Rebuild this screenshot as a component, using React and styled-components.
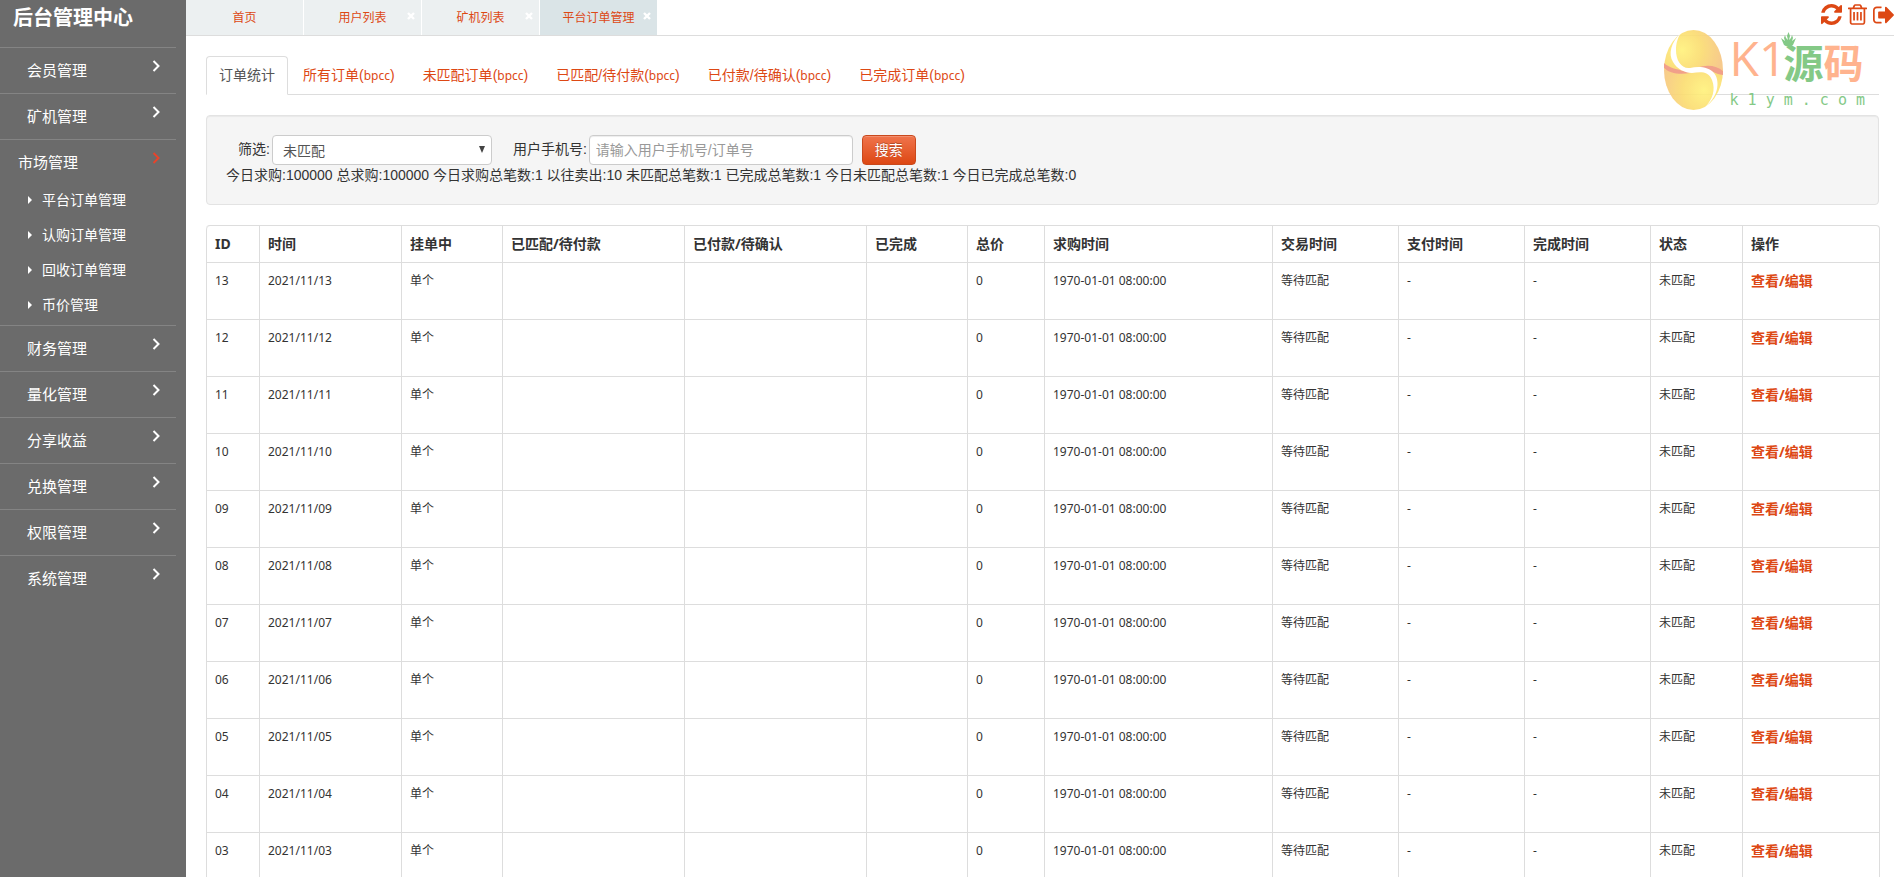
import React, { useState } from 'react'
import styled, { createGlobalStyle, css } from "styled-components";

const menus = [
  { name: "会员管理" },
  { name: "矿机管理" },
  {
    name: "市场管理",
    children: ["平台订单管理", "认购订单管理", "回收订单管理", "币价管理"]
  },
  { name: "财务管理" },
  { name: "量化管理" },
  { name: "分享收益" },
  { name: "兑换管理" },
  { name: "权限管理" },
  { name: "系统管理" }
]

const pages = ["首页", "用户列表", "矿机列表", "平台订单管理"]

const orderTabs = ["所有订单", "未匹配订单", "已匹配/待付款", "已付款/待确认", "已完成订单"]

const columns = [
  { title: "ID", width: 53 },
  { title: "时间", width: 142 },
  { title: "挂单中", width: 101 },
  { title: "已匹配/待付款", width: 182 },
  { title: "已付款/待确认", width: 182 },
  { title: "已完成", width: 101 },
  { title: "总价", width: 77 },
  { title: "求购时间", width: 228 },
  { title: "交易时间", width: 126 },
  { title: "支付时间", width: 126 },
  { title: "完成时间", width: 126 },
  { title: "状态", width: 92 },
  { title: "操作", width: 137 }
]

const days = ["13", "12", "11", "10", "09", "08", "07", "06", "05", "04", "03"]

const RefreshIcon = () => (
  <svg width="21" height="21" viewBox="0 0 1536 1536" fill="currentColor" aria-hidden="true">
    <path d="M1511 928q0 5-1 7-64 268-268 434.500t-478 166.500q-146 0-282.500-55t-243.500-157l-129 129q-19 19-45 19t-45-19-19-45v-448q0-26 19-45t45-19h448q26 0 45 19t19 45-19 45l-137 137q71 66 161 102t187 36q134 0 250-65t186-179q11-17 53-117 8-23 30-23h192q13 0 22.500 9.500t9.500 22.500zm25-800v448q0 26-19 45t-45 19h-448q-26 0-45-19t-19-45 19-45l138-138q-148-137-349-137-134 0-250 65t-186 179q-11 17-53 117-8 23-30 23h-199q-13 0-22.500-9.500t-9.500-22.500v-7q65-268 270-434.500t480-166.500q146 0 284 55.500t245 156.500l130-129q19-19 45-19t45 19 19 45z" />
  </svg>
)

const TrashIcon = () => (
  <svg width="19" height="21" viewBox="0 192 1408 1536" fill="currentColor" aria-hidden="true">
    <path d="M512 800v576q0 14-9 23t-23 9h-64q-14 0-23-9t-9-23v-576q0-14 9-23t23-9h64q14 0 23 9t9 23zm256 0v576q0 14-9 23t-23 9h-64q-14 0-23-9t-9-23v-576q0-14 9-23t23-9h64q14 0 23 9t9 23zm256 0v576q0 14-9 23t-23 9h-64q-14 0-23-9t-9-23v-576q0-14 9-23t23-9h64q14 0 23 9t9 23zm128 724v-948h-896v948q0 22 7 40.500t14.500 27 10.500 8.500h832q3 0 10.500-8.500t14.500-27 7-40.500zm-672-1076h448l-48-117q-7-9-17-11h-317q-10 2-17 11zm928 32v64q0 14-9 23t-23 9h-96v948q0 83-47 143.500t-113 60.500h-832q-66 0-113-58.500t-47-141.500v-952h-96q-14 0-23-9t-9-23v-64q0-14 9-23t23-9h309l70-167q15-37 54-63t79-26h320q40 0 79 26t54 63l70 167h309q14 0 23 9t9 23z" />
  </svg>
)

const LogoutIcon = () => (
  <svg width="21" height="18" viewBox="0 256 1568 1280" fill="currentColor" aria-hidden="true">
    <path d="M640 1440q0 4 1 20t.5 26.500-3 23.500-10 19.500-20.500 6.500h-320q-119 0-203.500-84.500t-84.500-203.500v-704q0-119 84.500-203.500t203.500-84.500h320q13 0 22.500 9.500t9.500 22.500q0 4 1 20t.5 26.500-3 23.500-10 19.500-20.500 6.500h-320q-66 0-113 47t-47 113v704q0 66 47 113t113 47h312l11.500 1 11.500 3 8 5.500 7 9 2 13.500zm928-544q0 26-19 45l-544 544q-19 19-45 19t-45-19-19-45v-288h-448q-26 0-45-19t-19-45v-384q0-26 19-45t45-19h448v-288q0-26 19-45t45-19 45 19l544 544q19 19 19 45z" />
  </svg>
)

const Angle = () => (
  <svg width="8" height="12" viewBox="0 0 8 12" fill="none" stroke="currentColor" strokeWidth="2" aria-hidden="true">
    <path d="M1.500 1L6.500 6L1.500 11" />
  </svg>
)

const Caret = () => (
  <svg width="4" height="8" viewBox="0 0 4 8" fill="currentColor" aria-hidden="true">
    <path d="M0 0L4 4L0 8z" />
  </svg>
)

const Cross = () => (
  <svg width="8" height="8" viewBox="0 0 8 8" stroke="currentColor" strokeWidth="2.400" aria-hidden="true">
    <path d="M1 1L7 7M7 1L1 7" />
  </svg>
)

const LogoMark = () => (
  <svg width="60" height="80" viewBox="0 0 60 80" aria-hidden="true">
    <defs>
      <radialGradient id="goldTop" gradientUnits="userSpaceOnUse" cx="19" cy="20" r="40">
        <stop offset="0" stopColor="#fff27a" />
        <stop offset="0.5" stopColor="#fbdc70" />
        <stop offset="1" stopColor="#f7c580" />
      </radialGradient>
      <radialGradient id="goldBottom" gradientUnits="userSpaceOnUse" cx="41" cy="60" r="44">
        <stop offset="0" stopColor="#fff27a" />
        <stop offset="0.5" stopColor="#fbdc70" />
        <stop offset="1" stopColor="#f7c580" />
      </radialGradient>
    </defs>
    <path d="M1 40A29.500 40 0 0 1 60 40z" fill="url(#goldTop)" />
    <path d="M1 40A29.500 40 0 0 0 60 40z" fill="url(#goldBottom)" />
    <path d="M1 33C6 38 14 39 20 41L27 43C16 45 6 43 1 38z" fill="#f0967e" />
    <path d="M60 45C52 44 46 39 34 38C44 34 54 36 60 41z" fill="#f0967e" />
    {/* white band between the two halves */}
    <path
      d="M18 3C8 12 5 24 10 32C14 39 22 43 29 43C38 42 45 41 49 50C53 60 49 70 43 76C56 66 57 50 51 43C46 37 36 36 27 38C18 39 13 30 13 20C13 13 15 7 18 3z"
      fill="#fff"
    />
  </svg>
)

const Crown = () => (
  <svg width="15" height="15" viewBox="0 0 15 15" fill="currentColor" aria-hidden="true">
    <path d="M7.500 0L9 4L8 8L10 6L11 3L12 6L11 9L15 6L12 13Q7.500 16 3 13L0 6L4 9L3 6L4 3L5 6L7 8L6 4z" />
  </svg>
)

const App = () => {
  const [keyword, setKeyword] = useState("")
  const [status, setStatus] = useState("0")

  return (
    <>
      <GlobalStyle />
      <Layout>
        <Sidebar>
          <Brand>后台管理中心</Brand>
          <nav>
            {menus.map(menu => (
              <MenuGroup key={menu.name}>
                <MenuButton type="button" $open={!!menu.children}>
                  {menu.name}
                  <Angle />
                </MenuButton>
                {menu.children ? menu.children.map(child => (
                  <SubLink href="#" key={child}>
                    <Caret />
                    {child}
                  </SubLink>
                )) : null}
              </MenuGroup>
            ))}
          </nav>
        </Sidebar>

        <Main>
          <TopBar>
            {pages.map((page, index) => (
              <PageTab key={page} $active={index === 3}>
                <a href="#">{page}</a>
                {index > 0 ? (
                  <CloseButton type="button" aria-label={"关闭" + page}>
                    <Cross />
                  </CloseButton>
                ) : null}
              </PageTab>
            ))}
            <Tools>
              <ToolButton type="button" aria-label="刷新"><RefreshIcon /></ToolButton>
              <ToolButton type="button" aria-label="清除缓存"><TrashIcon /></ToolButton>
              <ToolButton type="button" aria-label="退出"><LogoutIcon /></ToolButton>
            </Tools>
          </TopBar>

          <Content>
            <OrderTabs>
              <OrderTab href="#" $active>订单统计</OrderTab>
              {orderTabs.map(tab => (
                <OrderTab href="#" key={tab}>{tab}(<Coin>bpcc</Coin>)</OrderTab>
              ))}
            </OrderTabs>

            <Well>
              <SearchForm onSubmit={e => e.preventDefault()}>
                <Field>
                  <label htmlFor="status">筛选:</label>
                  <SelectBox>
                    <select id="status" value={status} onChange={e => setStatus(e.target.value)}>
                      <option value="0">未匹配</option>
                      <option value="1">已匹配</option>
                      <option value="2">已完成</option>
                    </select>
                    <svg width="6" height="7" viewBox="0 0 6 7" fill="#444" aria-hidden="true">
                      <path d="M0 0H6L3 7z" />
                    </svg>
                  </SelectBox>
                </Field>
                <Field>
                  <label htmlFor="keyword">用户手机号:</label>
                  <TextInput
                    id="keyword"
                    type="text"
                    placeholder="请输入用户手机号/订单号"
                    value={keyword}
                    onChange={e => setKeyword(e.target.value)}
                  />
                </Field>
                <SearchButton type="submit">搜索</SearchButton>
              </SearchForm>
              <Stats>
                今日求购:100000 总求购:100000 今日求购总笔数:1 以往卖出:10 未匹配总笔数:1 已完成总笔数:1 今日未匹配总笔数:1 今日已完成总笔数:0
              </Stats>
            </Well>

            <Table>
              <colgroup>
                {columns.map(col => <col key={col.title} width={col.width} />)}
              </colgroup>
              <thead>
                <tr>
                  {columns.map(col => <th key={col.title}>{col.title}</th>)}
                </tr>
              </thead>
              <tbody>
                {days.map(day => (
                  <tr key={day}>
                    <td>{day}</td>
                    <td>2021/11/{day}</td>
                    <td>单个</td>
                    <td></td>
                    <td></td>
                    <td></td>
                    <td>0</td>
                    <td>1970-01-01 08:00:00</td>
                    <td>等待匹配</td>
                    <td>-</td>
                    <td>-</td>
                    <td>未匹配</td>
                    <td><EditLink href="#">查看/编辑</EditLink></td>
                  </tr>
                ))}
              </tbody>
            </Table>
          </Content>

          <Watermark>
            <LogoMark />
            <div>
              <LogoName>
                <LogoLatin>K1</LogoLatin>
                <LogoGreen>源<Crown /></LogoGreen>
                <span>码</span>
              </LogoName>
              <LogoSite>k 1 y m . c o m</LogoSite>
            </div>
          </Watermark>
        </Main>
      </Layout>
    </>
  )
}

const orange = "#dd4814";

const GlobalStyle = createGlobalStyle`
  * {
    box-sizing: border-box;
  }
  body {
    margin: 0;
    background: #fff;
    color: #333;
    font-family: "Liberation Sans", "Noto Sans CJK SC", sans-serif;
    font-size: 14px;
    line-height: 20px;
  }
  a {
    color: ${orange};
    text-decoration: none;
  }
  button, input, select {
    font: inherit;
  }
  svg {
    display: block;
    flex-shrink: 0;
  }
`;

const Layout = styled.div`
  display: flex;
  height: 100vh;
`;

const Sidebar = styled.aside`
  flex: 0 0 186px;
  padding-right: 10px;
  overflow: hidden;
  background: #6b6b6b;
  color: #fff;
`;

const Brand = styled.h1`
  height: 47px;
  margin: 0;
  padding-left: 13px;
  font-size: 20px;
  line-height: 36px;
`;

const MenuGroup = styled.div`
  border-top: 1px solid #848484;
`;

const MenuButton = styled.button`
  display: flex;
  align-items: center;
  justify-content: space-between;
  width: 100%;
  height: 45px;
  padding: 0 16px 0 ${props => (props.$open ? "18px" : "27px")};
  border: 0;
  background: none;
  color: #fff;
  font-size: 15px;
  cursor: pointer;
  svg {
    margin-bottom: 10px;
    color: ${props => (props.$open ? "#e8432a" : "#fff")};
  }
`;

const SubLink = styled.a`
  display: flex;
  align-items: center;
  gap: 10px;
  height: 30px;
  margin-bottom: 5px;
  padding-left: 28px;
  color: #fff;
`;

const Main = styled.main`
  position: relative;
  flex: 1;
  min-width: 0;
  overflow-y: auto;
  scrollbar-width: none;
`;

const TopBar = styled.header`
  display: flex;
  gap: 1px;
  height: 36px;
  border-bottom: 1px solid #ddd;
`;

const PageTab = styled.div`
  position: relative;
  width: 117px;
  background: ${props => (props.$active ? "#dae4e7" : "#ecf0f1")};
  a {
    display: block;
    height: 35px;
    font-size: 12px;
    line-height: 36px;
    text-align: center;
  }
`;

const CloseButton = styled.button`
  position: absolute;
  top: 12px;
  right: 6px;
  padding: 0;
  border: 0;
  background: none;
  color: #fff;
  cursor: pointer;
`;

const Tools = styled.div`
  display: flex;
  align-items: center;
  gap: 6px;
  margin-left: auto;
  padding-bottom: 6px;
`;

const ToolButton = styled.button`
  padding: 0;
  border: 0;
  background: none;
  color: ${orange};
  cursor: pointer;
`;

const Content = styled.div`
  padding: 20px 15px 0 20px;
`;

const OrderTabs = styled.nav`
  display: flex;
  gap: 2px;
  margin-bottom: 20px;
  border-bottom: 1px solid #ddd;
`;

const OrderTab = styled.a`
  height: 39px;
  margin-bottom: -1px;
  padding: 8px 12px;
  border: 1px solid transparent;
  border-radius: 4px 4px 0 0;
  ${props => props.$active && css`
    border-color: #ddd #ddd #fff;
    background: #fff;
    color: #555;
  `}
`;

const Coin = styled.span`
  font-family: "Noto Sans", sans-serif;
  font-size: 12px;
`;

const Well = styled.section`
  margin-bottom: 20px;
  padding: 19px;
  border: 1px solid #e3e3e3;
  border-radius: 4px;
  background: #f5f5f5;
  box-shadow: inset 0 1px 1px rgba(0, 0, 0, 0.05);
`;

const SearchForm = styled.form`
  display: flex;
  padding-left: 12px;
`;

const Field = styled.div`
  display: flex;
  gap: 2px;
  margin-right: 21px;
  label {
    line-height: 28px;
  }
  & + & {
    margin-right: 9px;
  }
`;

const control = css`
  height: 30px;
  border: 1px solid #ccc;
  border-radius: 4px;
  background: #fff;
  color: #555;
`;

const SelectBox = styled.div`
  position: relative;
  select {
    ${control}
    width: 220px;
    padding: 2px 20px 0 10px;
    appearance: none;
  }
  svg {
    position: absolute;
    top: 11px;
    right: 7px;
    pointer-events: none;
  }
`;

const TextInput = styled.input`
  ${control}
  width: 264px;
  padding: 0 6px;
  box-shadow: inset 0 1px 1px rgba(0, 0, 0, 0.075);
  &::placeholder {
    color: #999;
    opacity: 1;
  }
`;

const SearchButton = styled.button`
  height: 30px;
  padding: 0 12px;
  border: 1px solid #c9491d;
  border-radius: 4px;
  background: linear-gradient(#f0744c, ${orange});
  box-shadow: inset 0 1px 0 rgba(255, 255, 255, 0.2);
  color: #fff;
  text-shadow: 0 -1px 0 rgba(0, 0, 0, 0.25);
  cursor: pointer;
`;

const Stats = styled.p`
  margin: 0;
`;

const Table = styled.table`
  width: 100%;
  table-layout: fixed;
  border: 1px solid #ddd;
  border-left: 0;
  border-collapse: separate;
  border-spacing: 0;
  border-radius: 4px;
  th, td {
    padding: 8px;
    border-left: 1px solid #ddd;
    text-align: left;
    vertical-align: top;
    font-family: "Noto Sans", "Noto Sans CJK SC", sans-serif;
  }
  th:first-child {
    border-top-left-radius: 4px;
  }
  td {
    height: 57px;
    border-top: 1px solid #ddd;
    font-size: 12px;
  }
`;

const EditLink = styled.a`
  font-size: 14px;
  font-weight: bold;
`;

/* translucent site mark floating over the page corner */
const Watermark = styled.div`
  position: absolute;
  top: 30px;
  right: 29px;
  display: flex;
  gap: 7px;
  opacity: 0.9;
  pointer-events: none;
`;

const LogoName = styled.div`
  display: flex;
  height: 60px;
  color: #ffab82;
  font-family: "Noto Sans CJK SC", sans-serif;
  font-size: 40px;
  font-weight: bold;
  line-height: 62px;
`;

const LogoLatin = styled.span`
  width: 54px;
  font-family: "Open Sans", sans-serif;
  font-size: 48px;
  font-weight: normal;
  line-height: 56px;
`;

const LogoGreen = styled.span`
  position: relative;
  color: #77c47a;
  svg {
    position: absolute;
    top: 2px;
    left: -3px;
  }
`;

const LogoSite = styled.div`
  color: #77c47a;
  font-family: "DejaVu Sans Mono", monospace;
  font-size: 15px;
  white-space: nowrap;
`;

export default App
